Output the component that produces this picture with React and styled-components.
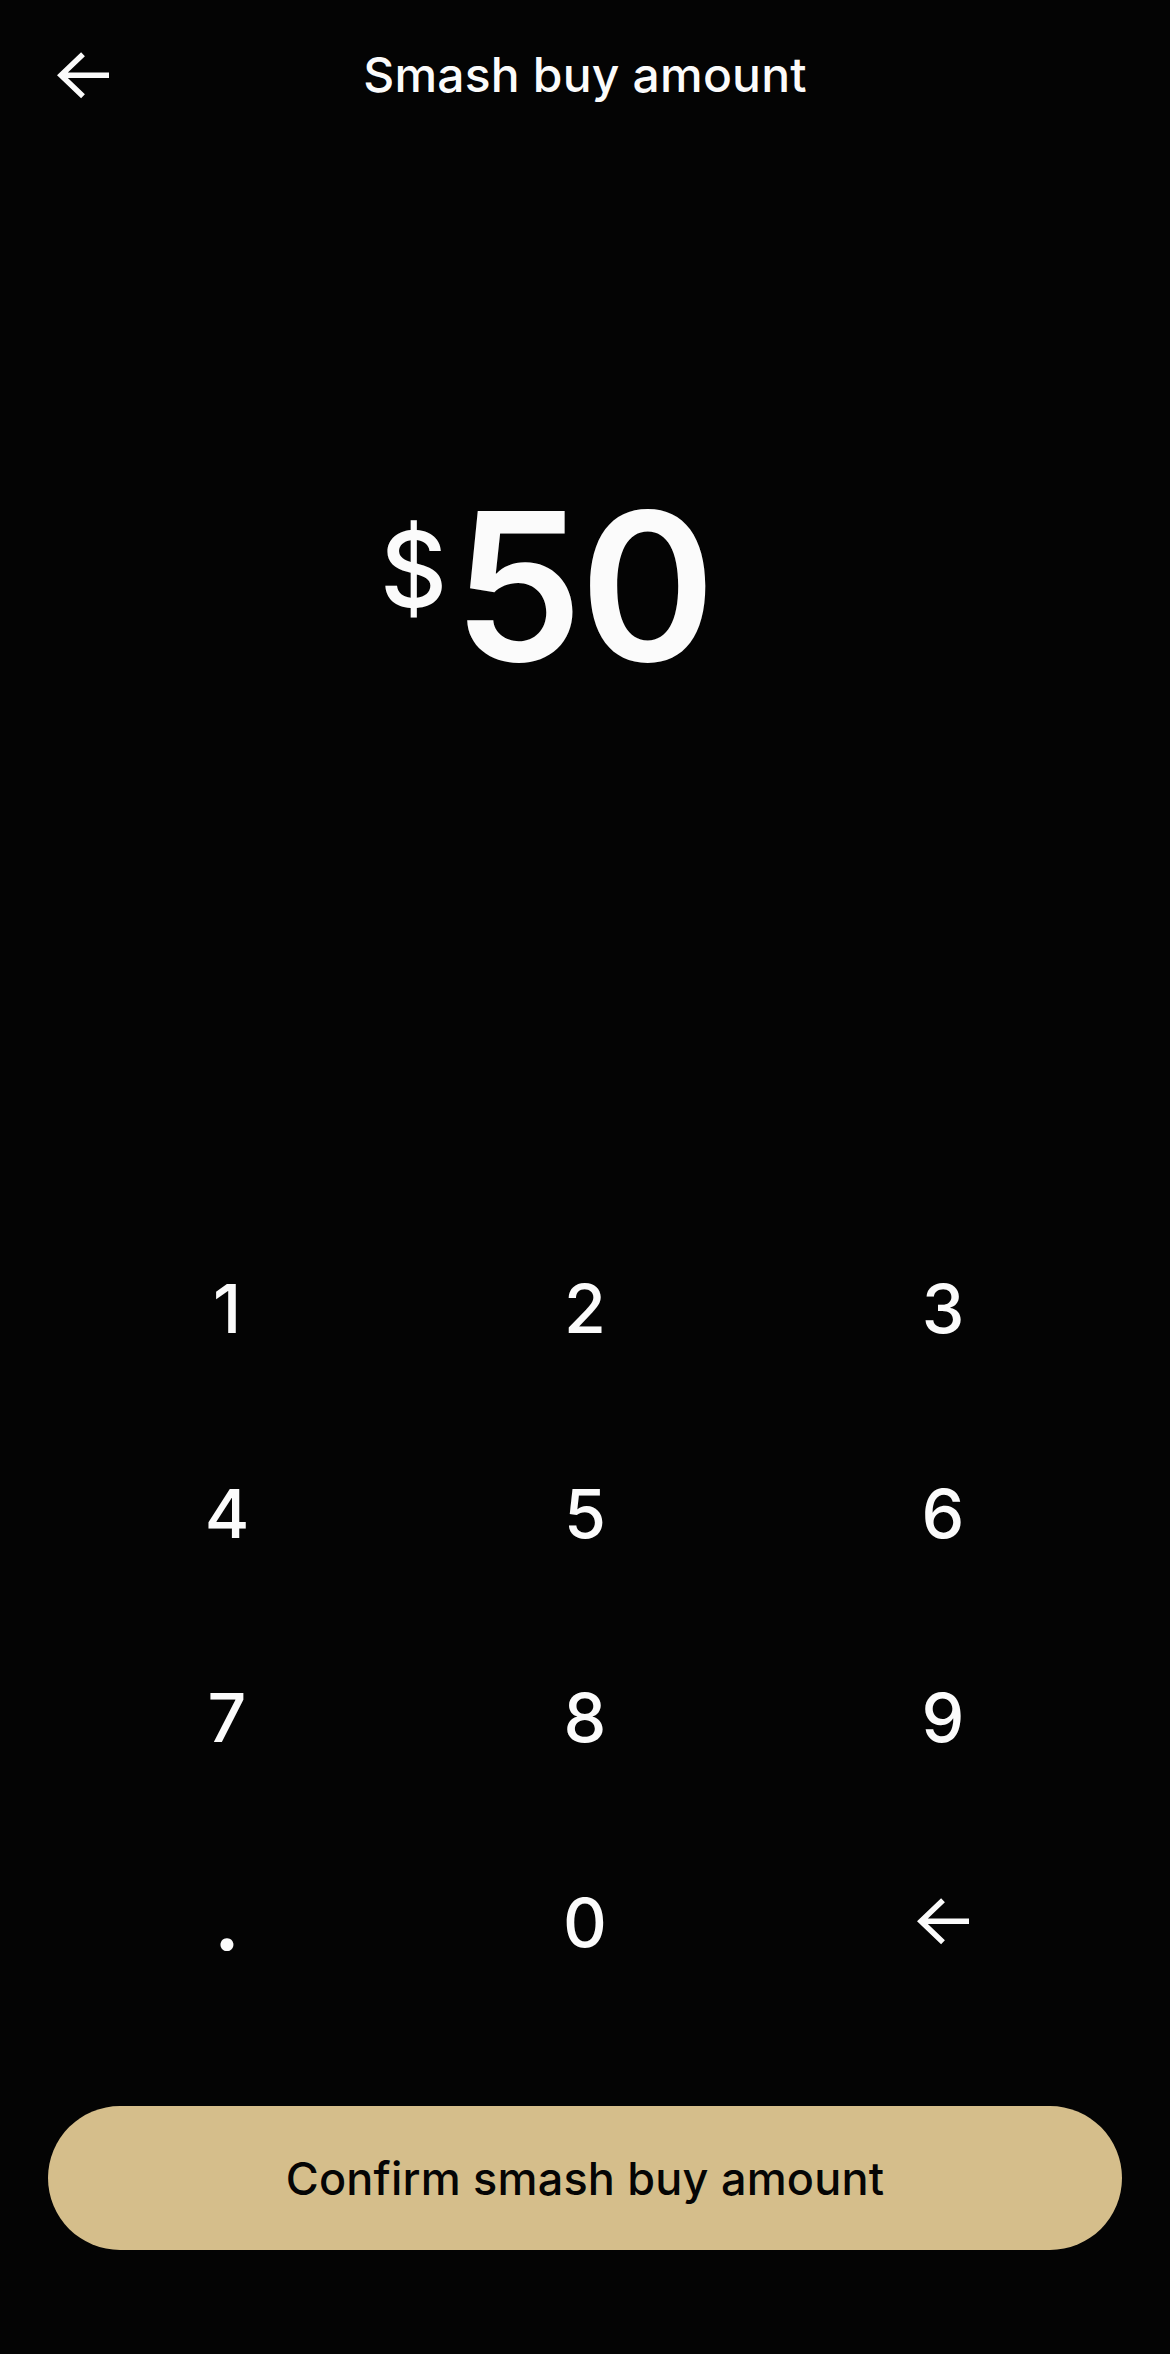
import React, { useState } from "react";
import styled, { createGlobalStyle } from "styled-components";

const GlobalStyle = createGlobalStyle`
  html, body {
    margin: 0;
    padding: 0;
    background: #040404;
  }
  * {
    box-sizing: border-box;
  }
`;

const Screen = styled.div`
  width: 1170px;
  height: 2354px;
  display: flex;
  flex-direction: column;
  background: #040404;
  color: #fbfbfb;
  font-family: Inter, "Liberation Sans", Arial, sans-serif;
`;

const Header = styled.header`
  height: 150px;
  display: grid;
  grid-template-columns: 1fr auto 1fr;
  align-items: center;
  padding: 0 56px;
`;

const IconButton = styled.button`
  justify-self: start;
  display: flex;
  align-items: center;
  justify-content: center;
  padding: 0;
  border: 0;
  background: none;
  color: #fbfbfb;
  cursor: pointer;
`;

const Title = styled.h1`
  margin: 0;
  font-size: 48px;
  font-weight: 500;
  letter-spacing: 0.2px;
  line-height: 1;
`;

const AmountArea = styled.section`
  height: 872px;
  display: flex;
  align-items: center;
  justify-content: center;
`;

const Amount = styled.div`
  position: relative;
  margin-left: -4px;
  font-size: 206px;
  font-weight: 600;
  line-height: 1;
  letter-spacing: -3px;
`;

// the $ hangs to the left so that the digits stay centred
const Currency = styled.span`
  position: absolute;
  right: calc(100% + 6px);
  top: 34px;
  font-size: 104px;
  font-weight: 500;
  line-height: 1;
  letter-spacing: 0;
`;

const Keypad = styled.div`
  margin-top: auto;
  display: grid;
  grid-template-columns: repeat(3, 1fr);
  grid-auto-rows: 204.5px;
  padding: 0 48px;
`;

const Key = styled.button`
  display: flex;
  align-items: center;
  justify-content: center;
  padding: 0;
  border: 0;
  background: none;
  color: #fbfbfb;
  font-family: inherit;
  font-size: ${(props) => (props.dot ? "76px" : "68px")};
  font-weight: ${(props) => (props.dot ? 700 : 500)};
  line-height: 1;
  cursor: pointer;
`;

const Footer = styled.div`
  padding: 82px 48px 104px;
`;

const ConfirmButton = styled.button`
  width: 100%;
  height: 144px;
  border: 0;
  border-radius: 72px;
  background: #d5be8b;
  color: #050505;
  font-family: inherit;
  font-size: 45px;
  font-weight: 500;
  letter-spacing: 0.2px;
  cursor: pointer;
`;

const Arrow = ({ size = 54 }) => (
  <svg width={size} height={size * 0.9} viewBox="0 0 54 48" fill="none">
    <path
      d="M53 24H5M27 3L5 24L27 45"
      stroke="currentColor"
      strokeWidth="5.5"
      strokeLinejoin="miter"
    />
  </svg>
);

const keys = ["1", "2", "3", "4", "5", "6", "7", "8", "9", ".", "0", "back"];

export default function App() {
  const [value, setValue] = useState("50");

  const press = (k) => {
    if (k === "back") {
      setValue((v) => (v.length > 1 ? v.slice(0, -1) : "0"));
    } else if (k === ".") {
      setValue((v) => (v.includes(".") ? v : v + "."));
    } else {
      setValue((v) => (v === "0" ? k : v + k));
    }
  };

  return (
    <>
      <GlobalStyle />
      <Screen>
        <Header>
          <IconButton aria-label="Back">
            <Arrow />
          </IconButton>
          <Title>Smash buy amount</Title>
        </Header>

        <AmountArea>
          <Amount>
            <Currency>$</Currency>
            {value}
          </Amount>
        </AmountArea>

        <Keypad>
          {keys.map((k) => (
            <Key key={k} dot={k === "."} onClick={() => press(k)} aria-label={k}>
              {k === "back" ? <Arrow size={54} /> : k}
            </Key>
          ))}
        </Keypad>

        <Footer>
          <ConfirmButton>Confirm smash buy amount</ConfirmButton>
        </Footer>
      </Screen>
    </>
  );
}
